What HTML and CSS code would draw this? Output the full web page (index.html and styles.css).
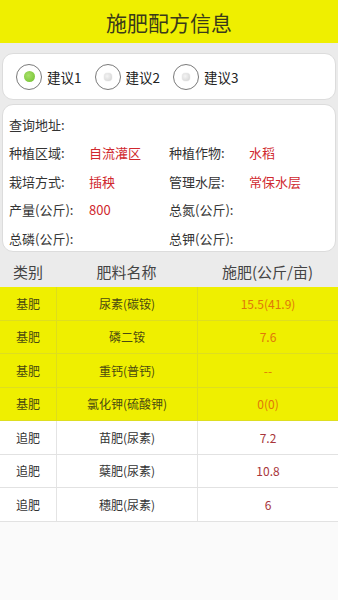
FILE: index.html
```html
<!DOCTYPE html>
<html lang="zh">
<head>
<meta charset="utf-8">
<title>施肥配方信息</title>
<link rel="stylesheet" href="styles.css">
</head>
<body>
<header class="topbar">施肥配方信息</header>
<section class="top">
  <div class="card radios">
    <label class="radio"><span class="dot on"></span><span>建议1</span></label>
    <label class="radio"><span class="dot"></span><span>建议2</span></label>
    <label class="radio"><span class="dot"></span><span>建议3</span></label>
  </div>
  <div class="card info">
    <div class="row"><span class="lbl">查询地址:</span></div>
    <div class="row"><span class="lbl">种植区域:</span><span class="val">自流灌区</span><span class="lbl">种植作物:</span><span class="val">水稻</span></div>
    <div class="row"><span class="lbl">栽培方式:</span><span class="val">插秧</span><span class="lbl">管理水层:</span><span class="val">常保水层</span></div>
    <div class="row"><span class="lbl">产量(公斤):</span><span class="val">800</span><span class="lbl">总氮(公斤):</span><span class="val"></span></div>
    <div class="row"><span class="lbl">总磷(公斤):</span><span class="val"></span><span class="lbl">总钾(公斤):</span><span class="val"></span></div>
  </div>
</section>
<div class="thead">
  <span>类别</span><span>肥料名称</span><span>施肥(公斤/亩)</span>
</div>
<div class="tbody">
  <div class="tr base"><span>基肥</span><span>尿素(碳铵)</span><span class="num">15.5(41.9)</span></div>
  <div class="tr base"><span>基肥</span><span>磷二铵</span><span class="num">7.6</span></div>
  <div class="tr base"><span>基肥</span><span>重钙(普钙)</span><span class="num">--</span></div>
  <div class="tr base"><span>基肥</span><span>氯化钾(硫酸钾)</span><span class="num">0(0)</span></div>
  <div class="tr"><span>追肥</span><span>苗肥(尿素)</span><span class="num">7.2</span></div>
  <div class="tr"><span>追肥</span><span>蘖肥(尿素)</span><span class="num">10.8</span></div>
  <div class="tr"><span>追肥</span><span>穗肥(尿素)</span><span class="num">6</span></div>
</div>
</body>
</html>
```
FILE: styles.css
```css
* { box-sizing: border-box; }
html, body { margin: 0; padding: 0; }
body {
  background: #fafafa;
  font-family: "Noto Sans CJK SC", "Noto Sans", Roboto, sans-serif;
  color: #333;
  width: 338px;
}
.topbar {
  height: 43px;
  background: #efef00;
  color: #3a3a1a;
  font-size: 21px;
  display: flex;
  align-items: center;
  justify-content: center;
}
.top {
  background: #ebebeb;
  padding: 10px 2px 3px;
  display: flex;
  flex-direction: column;
  gap: 4px;
}
.card {
  background: #fff;
  border: 1px solid #dcdcdc;
  border-radius: 11px;
}
.radios {
  height: 47px;
  display: flex;
  align-items: center;
  padding-left: 13px;
}
.radio {
  display: flex;
  align-items: center;
  font-size: 13.5px;
  color: #222;
  margin-right: 13px;
}
.radio span:last-child { margin-left: 5px; }
.dot {
  width: 26px;
  height: 26px;
  border-radius: 50%;
  border: 1.5px solid #7a7a7a;
  background: #fff;
  display: flex;
  align-items: center;
  justify-content: center;
}
.dot::after {
  content: "";
  width: 8px;
  height: 8px;
  border-radius: 50%;
  background: radial-gradient(circle at 40% 40%, #f4f4f4, #cfcfcf);
  box-shadow: 0 0 1px #bbb;
}
.dot.on::after {
  width: 11px;
  height: 11px;
  background: radial-gradient(circle at 40% 40%, #a8e06a, #6fbf2c);
  box-shadow: none;
}
.info {
  height: 148px;
  padding: 5px 0 0 6px;
}
.row {
  display: grid;
  grid-template-columns: 80px 80px 80px 80px;
  height: 28.5px;
  align-items: center;
  font-size: 13px;
}
.lbl { color: #333; white-space: nowrap; }
.val { color: #d0282e; }
.thead {
  background: #ebebeb;
  height: 32px;
  display: grid;
  grid-template-columns: 56px 141px 141px;
  align-items: center;
  font-size: 15px;
  color: #444;
  text-align: center;
}
.tbody { background: #fff; }
.tr {
  display: grid;
  grid-template-columns: 56px 141px 141px;
  height: 33.5px;
  border-bottom: 1px solid #e2e2e2;
  font-size: 12px;
  color: #333;
  text-align: center;
}
.tr span {
  display: flex;
  align-items: center;
  justify-content: center;
}
.tr span + span { border-left: 1px solid #e4e4e4; }
.tr .num { color: #a8353a; }
.tr.base {
  background: #efef00;
  color: #4a4a10;
  border-bottom-color: #dede20;
}
.tr.base span + span { border-left-color: #dede1a; }
.tr.base .num { color: #e0770a; }
```
